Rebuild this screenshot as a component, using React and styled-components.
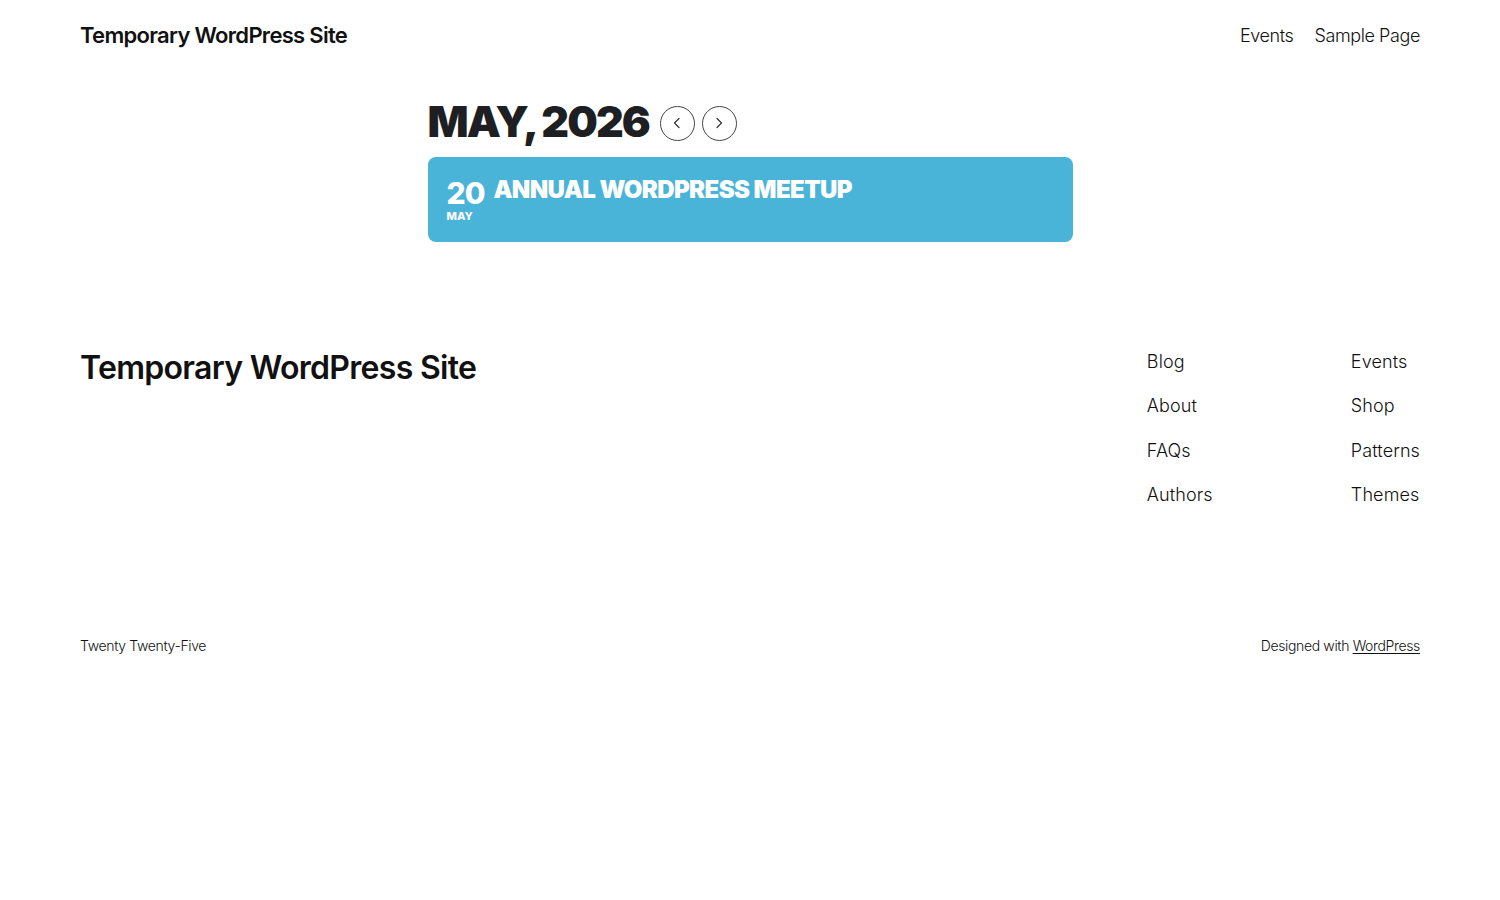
import React from "react";
import styled, { createGlobalStyle } from "styled-components";

const GlobalStyle = createGlobalStyle`
  html, body {
    margin: 0;
    padding: 0;
    background: #ffffff;
    color: #111111;
    font-family: Inter, "Noto Sans", sans-serif;
  }
  * { box-sizing: border-box; }
`;

const Page = styled.div`
  width: 1500px;
  min-height: 900px;
`;

const Header = styled.header`
  display: flex;
  align-items: center;
  justify-content: space-between;
  padding: 0 80px;
  height: 70px;
`;

const SiteTitle = styled.div`
  font-size: ${(p) => (p.$large ? "32px" : "22px")};
  font-weight: 600;
  letter-spacing: -0.7px;
  line-height: 1.2;
  color: #111111;
`;

const Nav = styled.nav`
  display: flex;
  gap: 21px;
`;

const NavLink = styled.a`
  font-size: 18px;
  font-weight: 300;
  color: #111111;
  text-decoration: none;
  letter-spacing: -0.4px;
`;

const Main = styled.main`
  width: 645px;
  margin: 0 auto;
  padding-top: 29px;
`;

const MonthRow = styled.div`
  display: flex;
  align-items: center;
  gap: 7px;
  height: 48px;
`;

const MonthTitle = styled.h1`
  margin: -3px 4px 0 0;
  font-family: Inter, sans-serif;
  font-size: 43px;
  font-weight: 900;
  letter-spacing: -1.9px;
  color: #1e1f23;
  line-height: 1;
`;

const CircleButton = styled.button`
  width: 35px;
  height: 35px;
  border-radius: 50%;
  border: 1px solid #444;
  background: #fff;
  display: flex;
  align-items: center;
  justify-content: center;
  padding: 0;
  color: #333;
`;

const EventCard = styled.div`
  margin-top: 10px;
  height: 85px;
  background: #4ab4d8;
  border-radius: 8px;
  display: flex;
  gap: 9px;
  padding: 18px 19px;
  color: #ffffff;
`;

const DateBlock = styled.div`
  display: flex;
  flex-direction: column;
`;

const Day = styled.div`
  font-size: 30px;
  font-weight: 800;
  line-height: 1;
  margin-top: 3px;
  letter-spacing: -1px;
`;

const Month = styled.div`
  font-size: 11px;
  font-weight: 800;
  line-height: 1;
  margin-top: 3px;
`;

const EventTitle = styled.div`
  font-size: 24px;
  font-weight: 900;
  letter-spacing: -0.6px;
  line-height: 1;
  margin-top: 3px;
`;

const Footer = styled.footer`
  padding: 107px 80px 0;
`;

const FooterTop = styled.div`
  display: flex;
  justify-content: space-between;
  align-items: flex-start;
`;

const FooterNav = styled.div`
  display: grid;
  grid-template-columns: 204px auto;
  row-gap: 20px;
  margin-top: 1px;
`;

const FooterLink = styled.a`
  font-size: 18px;
  font-weight: 300;
  color: #111111;
  text-decoration: none;
  line-height: 24.4px;
  letter-spacing: 0.1px;
`;

const FooterBottom = styled.div`
  display: flex;
  justify-content: space-between;
  margin-top: 129px;
  font-size: 14px;
  font-weight: 300;
  letter-spacing: -0.35px;
`;

const Underlined = styled.a`
  color: #111111;
  text-decoration: underline;
  text-underline-offset: 2px;
`;

const Chevron = ({ dir }) => (
  <svg width="16" height="16" viewBox="0 0 16 16" fill="none">
    <path
      d={dir === "left" ? "M10 3.5 L5.5 8 L10 12.5" : "M6 3.5 L10.5 8 L6 12.5"}
      stroke="#333"
      strokeWidth="1.2"
      strokeLinecap="round"
      strokeLinejoin="round"
    />
  </svg>
);

const footerLinks = [
  ["Blog", "Events"],
  ["About", "Shop"],
  ["FAQs", "Patterns"],
  ["Authors", "Themes"],
];

export default function App() {
  return (
    <Page>
      <GlobalStyle />
      <Header>
        <SiteTitle>Temporary WordPress Site</SiteTitle>
        <Nav>
          <NavLink href="#">Events</NavLink>
          <NavLink href="#">Sample Page</NavLink>
        </Nav>
      </Header>
      <Main>
        <MonthRow>
          <MonthTitle>MAY, 2026</MonthTitle>
          <CircleButton aria-label="Previous month">
            <Chevron dir="left" />
          </CircleButton>
          <CircleButton aria-label="Next month">
            <Chevron dir="right" />
          </CircleButton>
        </MonthRow>
        <EventCard>
          <DateBlock>
            <Day>20</Day>
            <Month>MAY</Month>
          </DateBlock>
          <EventTitle>ANNUAL WORDPRESS MEETUP</EventTitle>
        </EventCard>
      </Main>
      <Footer>
        <FooterTop>
          <SiteTitle $large>Temporary WordPress Site</SiteTitle>
          <FooterNav>
            {footerLinks.flat().map((l) => (
              <FooterLink key={l} href="#">
                {l}
              </FooterLink>
            ))}
          </FooterNav>
        </FooterTop>
        <FooterBottom>
          <span>Twenty Twenty-Five</span>
          <span>
            Designed with <Underlined href="#">WordPress</Underlined>
          </span>
        </FooterBottom>
      </Footer>
    </Page>
  );
}
